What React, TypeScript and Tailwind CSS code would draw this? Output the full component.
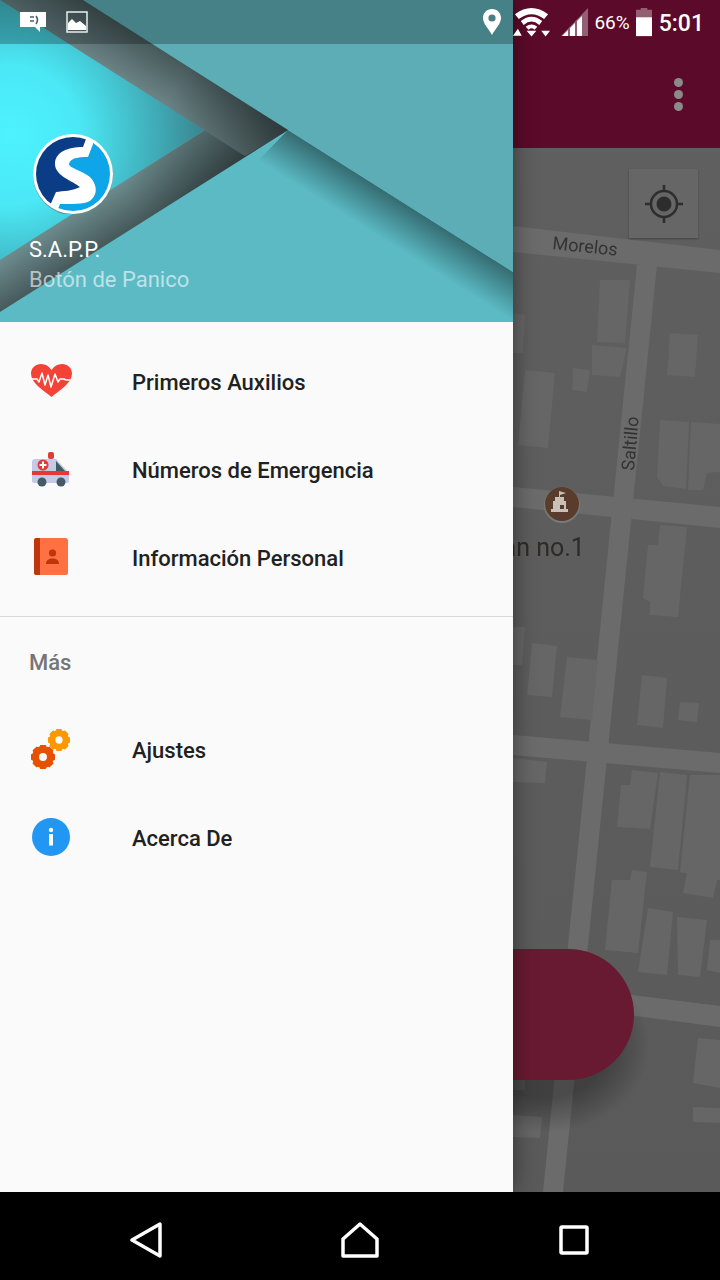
const buildings = [
  "600,280 630,280 625,343 597,342",
  "592,345 627,348 620,377 592,375",
  "670,333 698,335 695,377 667,375",
  "573,368 590,370 587,392 572,390",
  "525,370 555,373 548,448 518,445",
  "660,420 689,422 686,489 663,486 657,477",
  "691,422 720,424 720,472 707,473 703,490 688,490",
  "513,313 525,315 523,353 513,353",
  "660,525 687,527 678,617 650,615 650,602 643,598 648,545 658,545",
  "513,627 525,627 522,665 513,665",
  "532,643 557,646 552,697 527,695",
  "567,657 598,660 592,720 560,717",
  "642,675 667,678 663,728 637,725",
  "680,702 699,703 697,722 678,720",
  "513,758 547,762 545,783 513,782",
  "632,770 658,773 650,829 617,827 621,785 630,785",
  "660,772 687,775 678,870 650,867",
  "690,775 720,775 720,880 680,872",
  "687,873 718,877 713,898 683,893",
  "612,880 630,880 632,870 647,872 638,953 605,950",
  "648,908 673,912 667,975 638,972",
  "677,917 707,920 700,977 678,975",
  "710,940 720,940 720,973 707,970",
  "698,1038 720,1040 720,1088 693,1083",
  "693,1107 720,1108 720,1123 693,1122",
  "513,1115 542,1117 540,1138 513,1137",
  "513,1030 525,1030 525,1090 513,1090",
];

const roads = [
  "513,226 720,250 720,273 513,252",
  "513,487 720,507 720,528 513,507",
  "513,735 720,753 720,773 513,755",
  "513,980 720,1006 720,1027 513,1000",
  "637,265 657,265 563,1192 543,1192",
];

function MapView() {
  return (
    <svg className="h-full w-full blur-[0.6px]" viewBox="0 148 720 1044">
      <defs>
        <linearGradient id="mapBg" x1="0" y1="0" x2="0" y2="1">
          <stop offset="0" stopColor="#5f5f5f" />
          <stop offset="1" stopColor="#5a5a5a" />
        </linearGradient>
        <radialGradient id="fabShadow" cx="0.5" cy="0.5" r="0.5">
          <stop offset="0.6" stopColor="#000" stopOpacity="0.3" />
          <stop offset="1" stopColor="#000" stopOpacity="0" />
        </radialGradient>
      </defs>
      <rect x="0" y="148" width="720" height="1044" fill="url(#mapBg)" />
      {roads.map((p) => (
        <polygon key={p} points={p} fill="#6b6b6b" />
      ))}
      {buildings.map((p) => (
        <polygon key={p} points={p} fill="#666666" />
      ))}
      <text x="552" y="249" transform="rotate(6 552 249)" fontSize="18" fill="#333333" fontFamily="Roboto, sans-serif">Morelos</text>
      <text x="634" y="471" transform="rotate(-85 634 471)" fontSize="18" fill="#333333" fontFamily="Roboto, sans-serif">Saltillo</text>
      <circle cx="562" cy="505" r="18" fill="#7a7a7a" />
      <circle cx="562" cy="504" r="17" fill="#5a3c2c" />
      <path d="M555 497 h4 v-6 l7 2 -6 2 v2 h4 v4 h2 v8 h2 v3 h-17 v-3 h2 v-8 h2 z" fill="#c9c0b8" />
      <rect x="560" y="505" width="4" height="4" fill="#5a3c2c" />
      <text x="475" y="556" fontSize="25" fill="#2f2a28" fontFamily="Roboto, sans-serif">Juan no.1</text>
      <ellipse cx="545" cy="1045" rx="105" ry="88" fill="url(#fabShadow)" />
    </svg>
  );
}

function HeaderArt() {
  return (
    <svg className="absolute inset-0 h-full w-full" viewBox="0 0 513 322">
      <defs>
        <radialGradient id="cyan" gradientUnits="userSpaceOnUse" cx="10" cy="135" r="200">
          <stop offset="0" stopColor="#4df2ff" />
          <stop offset="0.35" stopColor="#4be8f6" />
          <stop offset="0.75" stopColor="#3fa9b4" />
          <stop offset="1" stopColor="#3a7f88" />
        </radialGradient>
        <linearGradient id="band1" gradientUnits="userSpaceOnUse" x1="188" y1="66" x2="164" y2="105">
          <stop offset="0" stopColor="#46585a" />
          <stop offset="1" stopColor="#6c8486" />
        </linearGradient>
        <linearGradient id="band2" gradientUnits="userSpaceOnUse" x1="150" y1="217" x2="126" y2="180">
          <stop offset="0" stopColor="#45585a" />
          <stop offset="1" stopColor="#6c8a8c" />
        </linearGradient>
        <linearGradient id="band1Dark" gradientUnits="userSpaceOnUse" x1="170" y1="98" x2="265" y2="158">
          <stop offset="0" stopColor="#000" stopOpacity="0" />
          <stop offset="1" stopColor="#000" stopOpacity="0.38" />
        </linearGradient>
        <linearGradient id="band2Dark" gradientUnits="userSpaceOnUse" x1="130" y1="195" x2="235" y2="130">
          <stop offset="0" stopColor="#000" stopOpacity="0" />
          <stop offset="1" stopColor="#000" stopOpacity="0.32" />
        </linearGradient>
        <linearGradient id="edge" gradientUnits="userSpaceOnUse" x1="400" y1="201" x2="378" y2="236">
          <stop offset="0" stopColor="#000" stopOpacity="0.42" />
          <stop offset="1" stopColor="#000" stopOpacity="0" />
        </linearGradient>
      </defs>
      <rect width="513" height="322" fill="#5bbac4" />
      <polygon points="288,130 513,272 513,322 100,322" fill="url(#edge)" />
      <polygon points="83,0 513,0 513,272 288,130" fill="#5cadb5" />
      <polygon points="0,0 205,130 0,260" fill="url(#cyan)" />
      <polygon points="205,130 288,130 0,312 0,260" fill="url(#band2)" />
      <polygon points="205,130 288,130 0,312 0,260" fill="url(#band2Dark)" />
      <polygon points="0,0 83,0 288,130 245,156" fill="url(#band1)" />
      <polygon points="0,0 83,0 288,130 245,156" fill="url(#band1Dark)" />
    </svg>
  );
}

function Logo() {
  return (
    <svg className="h-20 w-20" viewBox="0 0 80 80">
      <defs>
        <clipPath id="logoClip">
          <circle cx="40" cy="40" r="37" />
        </clipPath>
      </defs>
      <circle cx="40" cy="41" r="40" fill="#6b8c90" />
      <circle cx="40" cy="40" r="40" fill="#fff" />
      <g clipPath="url(#logoClip)">
        <path d="M60 0 L60 10 L55 23 C45 23 37 24 36 30 C36 34 50 37 57 43 C64 50 65 60 58 66 C54 70 45 70 27 70 L23 80 L80 80 L80 0 Z" fill="#0ea5e9" />
        <path d="M54 0 L53 5 L50 13 C35 13 22 18 22 30 C22 42 40 47 47 53 C40 57 30 57 23 58 L15 76 L0 80 L0 0 Z" fill="#0a3d86" />
      </g>
    </svg>
  );
}

function Heart() {
  return (
    <svg className="h-11 w-11 shrink-0" viewBox="0 0 44 44">
      <path d="M22.5 37 C14 30 2 23 2 13.5 C2 8 6.5 4 12 4 C16.5 4 20 6 22.5 10 C25 6 28.5 4 33 4 C38.5 4 43 8 43 13.5 C43 23 31 30 22.5 37 Z" fill="#f44336" />
      <path d="M3 19 H8 L10 22 L13 13 L16 25 L19 15 L22 27 L26 14 L29 22 L31 19 H35 L37 20 H41" fill="none" stroke="#fff" strokeWidth="1.5" strokeLinejoin="round" />
    </svg>
  );
}

function Ambulance() {
  return (
    <svg className="h-11 w-11 shrink-0" viewBox="0 0 44 44">
      <rect x="19" y="4" width="6" height="7" rx="2" fill="#e53935" />
      <path d="M3 14 a3 3 0 0 1 3 -3 H27 L40 25 V33 a2 2 0 0 1 -2 2 H5 a2 2 0 0 1 -2 -2 Z" fill="#c5cae9" />
      <path d="M27 13 L37 24 H27 Z" fill="#455a64" />
      <rect x="3" y="23" width="37" height="4" fill="#e53935" />
      <circle cx="14" cy="17" r="5.5" fill="#e53935" />
      <path d="M13 13.5 h2 v2.5 h2.5 v2 h-2.5 v2.5 h-2 v-2.5 h-2.5 v-2 h2.5 z" fill="#fff" />
      <circle cx="13" cy="34" r="4.5" fill="#455a64" />
      <circle cx="32" cy="34" r="4.5" fill="#455a64" />
    </svg>
  );
}

function Book() {
  return (
    <svg className="h-11 w-11 shrink-0" viewBox="0 0 44 44">
      <rect x="5" y="2" width="34" height="37" rx="2.5" fill="#ff7043" />
      <path d="M7.5 2 H11 V39 H7.5 A2.5 2.5 0 0 1 5 36.5 V4.5 A2.5 2.5 0 0 1 7.5 2 Z" fill="#bf360c" />
      <circle cx="23.5" cy="17" r="3.6" fill="#bf360c" />
      <path d="M17 28 C17 24 20 22.5 23.5 22.5 C27 22.5 30 24 30 28 Z" fill="#bf360c" />
    </svg>
  );
}

function Gear({ cx, cy, r, color }: { cx: number; cy: number; r: number; color: string }) {
  const teeth = [0, 45, 90, 135, 180, 225, 270, 315];
  return (
    <g>
      <circle cx={cx} cy={cy} r={r * 0.62} fill="none" stroke={color} strokeWidth={r * 0.58} />
      {teeth.map((a) => (
        <rect key={a} x={cx - r * 0.27} y={cy - r} width={r * 0.54} height={r * 0.4} rx="1" fill={color} transform={`rotate(${a} ${cx} ${cy})`} />
      ))}
    </g>
  );
}

function Gears() {
  return (
    <svg className="h-11 w-11 shrink-0" viewBox="0 0 44 44">
      <Gear cx={30} cy={12} r={11} color="#ff9800" />
      <Gear cx={14} cy={29} r={12} color="#e65100" />
    </svg>
  );
}

function Info() {
  return (
    <svg className="h-11 w-11 shrink-0" viewBox="0 0 44 44">
      <circle cx="22" cy="21" r="19" fill="#2196f3" />
      <circle cx="22" cy="14" r="2.2" fill="#fff" />
      <rect x="20" y="18" width="4" height="11.5" fill="#fff" />
    </svg>
  );
}

function Row({ icon, label }: { icon: React.ReactNode; label: string }) {
  return (
    <div className="flex h-[88px] items-center gap-[59px] pl-[29px]">
      {icon}
      <span className="text-[22px] font-medium text-[#212121]">{label}</span>
    </div>
  );
}

function StatusBar() {
  return (
    <div className="absolute left-0 top-0 flex h-[44px] w-full items-center text-white">
      <div className="absolute left-0 top-0 h-[44px] w-[513px] bg-black/25" />
      <div className="relative flex w-full items-center pl-[19px] pr-[16px]">
        <svg className="h-[22px] w-[28px]" viewBox="0 0 28 22">
          <path d="M1 1 H27 V16 H21 V21 L16 16 H1 Z" fill="#fff" />
          <path d="M11 6 h4 M11 10 h4" stroke="#47606a" strokeWidth="1.6" />
          <path d="M17 5 q3 4 0 8" fill="none" stroke="#47606a" strokeWidth="1.6" />
        </svg>
        <svg className="ml-[18px] h-[24px] w-[24px]" viewBox="0 0 24 24">
          <rect x="2" y="2" width="20" height="20" fill="none" stroke="#e8eeee" strokeWidth="1.5" />
          <path d="M3 20 V13 L7 9 L11 13 L15 11 L21 16 V20 Z" fill="#fff" />
        </svg>
        <svg className="ml-auto h-[28px] w-[20px]" viewBox="0 0 20 28">
          <path d="M10 1 C4.5 1 1 5 1 10 C1 16 7 21 10 27 C13 21 19 16 19 10 C19 5 15.5 1 10 1 Z" fill="#fff" />
          <circle cx="10" cy="10" r="3.6" fill="#487d85" />
        </svg>
        <svg className="ml-[11px] h-[30px] w-[37px]" viewBox="0 0 38 30">
          <path d="M2 7 Q19 -6 36 7 L32 12 Q19 2 6 12 Z" fill="#fff" />
          <path d="M8 14 Q19 5 30 14 L27 18 Q19 11 11 18 Z" fill="#fff" />
          <path d="M13 20 Q19 15 25 20 L22 23 Q19 20 16 23 Z" fill="#fff" />
          <path d="M5 22 L9 29 H0 Z M14 24 H24 L19 30 Z M29 24 H38 L33.5 30 Z" fill="#fff" />
        </svg>
        <svg className="ml-[11px] h-[30px] w-[28px]" viewBox="0 0 28 30">
          <path d="M0 29 L27 1 V29 Z" fill="#fff" fillOpacity="0.35" />
          <path d="M1 29 L7 23 V29 Z M9 29 V21 L14 16 V29 Z M16 29 V14 L21 9 V29 Z" fill="#fff" />
        </svg>
        <span className="ml-[5px] text-[19px] leading-none">66%</span>
        <svg className="ml-[6px] h-[30px] w-[16px]" viewBox="0 0 17 30">
          <path d="M5 0 H12 V2 H17 V30 H0 V2 H5 Z" fill="#fff" fillOpacity="0.35" />
          <rect x="0" y="10" width="17" height="20" fill="#fff" />
        </svg>
        <span className="ml-[7px] pt-[3px] text-[23px] font-medium leading-none">5:01</span>
      </div>
    </div>
  );
}

function Drawer() {
  return (
    <div className="absolute left-0 top-0 z-10 flex h-[1192px] w-[513px] flex-col bg-[#fafafa] shadow-[0_0_22px_rgba(0,0,0,0.45)]">
      <div className="relative h-[322px] shrink-0 bg-[#5bbac4]">
        <HeaderArt />
        <div className="relative flex flex-col pl-[29px] pt-[134px]">
          <div className="pl-[4px]">
            <Logo />
          </div>
          <span className="mt-[21px] text-[22px] leading-[30px] text-white">S.A.P.P.</span>
          <span className="text-[22px] leading-[30px] text-white/60">Botón de Panico</span>
        </div>
      </div>
      <div className="flex flex-col pt-4">
        <Row icon={<Heart />} label="Primeros Auxilios" />
        <Row icon={<Ambulance />} label="Números de Emergencia" />
        <Row icon={<Book />} label="Información Personal" />
        <div className="mt-[14px] h-px bg-[#d9d9d9]" />
        <div className="flex h-[89px] items-center pl-[29px] pt-[2px] text-[22px] font-medium text-[#757575]">Más</div>
        <Row icon={<Gears />} label="Ajustes" />
        <Row icon={<Info />} label="Acerca De" />
      </div>
    </div>
  );
}

export default function App() {
  return (
    <div className="relative flex h-[1280px] w-[720px] flex-col overflow-hidden bg-black font-['Roboto',sans-serif]">
      <div className="flex h-[148px] shrink-0 items-start justify-end bg-[#5c0a29] pr-[37px] pt-[78px] shadow-[0_2px_6px_rgba(0,0,0,0.4)]">
        <div className="flex flex-col gap-[3px]">
          <div className="h-[9px] w-[9px] rounded-full bg-[#8a8a8a]" />
          <div className="h-[9px] w-[9px] rounded-full bg-[#8a8a8a]" />
          <div className="h-[9px] w-[9px] rounded-full bg-[#8a8a8a]" />
        </div>
      </div>
      <div className="relative h-[1044px] shrink-0">
        <MapView />
        <div className="absolute left-[629px] top-[21px] flex h-[69px] w-[69px] items-center justify-center bg-[#666666] shadow-[0_1px_2px_rgba(0,0,0,0.3)]">
          <svg className="h-10 w-10" viewBox="0 0 40 40">
            <circle cx="20" cy="20" r="13" fill="none" stroke="#2d2d2d" strokeWidth="2.5" />
            <circle cx="20" cy="20" r="7.5" fill="#2d2d2d" />
            <path d="M20 1 V8 M20 32 V39 M1 20 H8 M32 20 H39" stroke="#2d2d2d" strokeWidth="2.5" />
          </svg>
        </div>
        <div className="absolute left-[400px] top-[801px] h-[131px] w-[234px] rounded-full bg-[#691a33]" />
      </div>
      <div className="flex h-[88px] shrink-0 items-center justify-between bg-black pl-[130px] pr-[130px] pt-[7px]">
        <svg className="h-[36px] w-[32px]" viewBox="0 0 32 36">
          <path d="M30 2 V34 L2 18 Z" fill="none" stroke="#fff" strokeWidth="3.5" strokeLinejoin="round" />
        </svg>
        <svg className="h-[36px] w-[38px]" viewBox="0 0 38 36">
          <path d="M2 17 L19 2 L36 17 V34 H2 Z" fill="none" stroke="#fff" strokeWidth="3.5" strokeLinejoin="round" />
        </svg>
        <svg className="h-[32px] w-[32px]" viewBox="0 0 32 32">
          <rect x="3" y="3" width="26" height="26" rx="1" fill="none" stroke="#fff" strokeWidth="3.5" />
        </svg>
      </div>
      <Drawer />
      <div className="absolute left-0 top-0 z-20 w-full">
        <StatusBar />
      </div>
    </div>
  );
}
